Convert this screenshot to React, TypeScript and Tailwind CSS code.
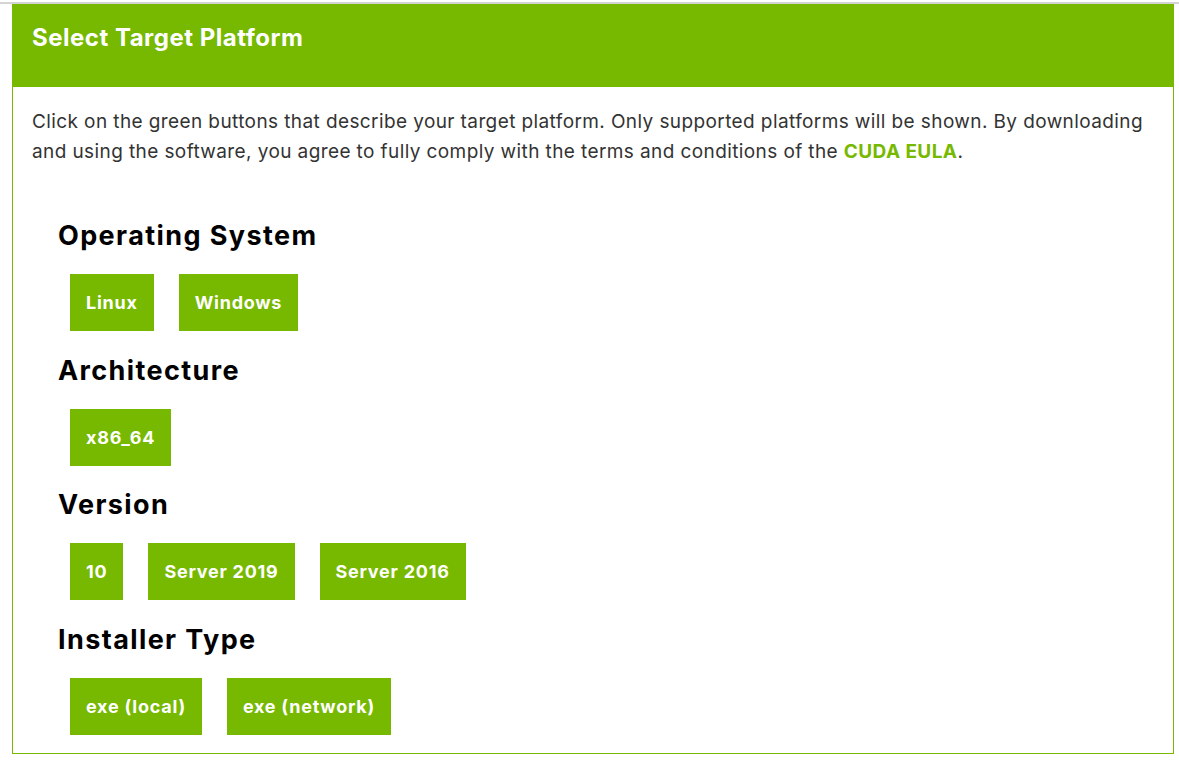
const sections = [
  { title: "Operating System", options: ["Linux", "Windows"] },
  { title: "Architecture", options: ["x86_64"] },
  { title: "Version", options: ["10", "Server 2019", "Server 2016"] },
  { title: "Installer Type", options: ["exe (local)", "exe (network)"] },
];

export default function App() {
  return (
    <div className="min-h-screen bg-white pt-[2px] font-['Inter',sans-serif]">
      <div className="h-[2px] bg-[#d4d4d4]" />
      <div className="mr-[5px] ml-[12px] w-[1162px] border border-t-0 border-[#76b900]">
        <div className="flex h-[83px] items-center bg-[#76b900] px-[19px] pb-[15px]">
          <h1 className="text-[24px] font-bold tracking-[0.5px] text-white">Select Target Platform</h1>
        </div>
        <div className="px-[19px] pt-[20px] pb-[18px]">
          <p className="text-[19px] leading-[30px] tracking-[0.4px] text-[#333333]">
            Click on the green buttons that describe your target platform. Only supported platforms will be
            shown. By downloading and using the software, you agree to fully comply with the terms and
            conditions of the <span className="font-bold text-[#76b900]">CUDA EULA</span>.
          </p>
          <div className="mt-[52px] flex flex-col gap-[22.7px] pl-[26px]">
            {sections.map((s) => (
              <div key={s.title}>
                <h2 className="text-[27px] leading-[34px] font-bold tracking-[1.4px] text-black">{s.title}</h2>
                <div className="mt-[21px] ml-[12px] flex gap-[25px]">
                  {s.options.map((o) => (
                    <button
                      key={o}
                      className="h-[57px] bg-[#76b900] px-[16px] text-[18px] font-bold tracking-[0.75px] text-white"
                    >
                      {o}
                    </button>
                  ))}
                </div>
              </div>
            ))}
          </div>
        </div>
      </div>
    </div>
  );
}
